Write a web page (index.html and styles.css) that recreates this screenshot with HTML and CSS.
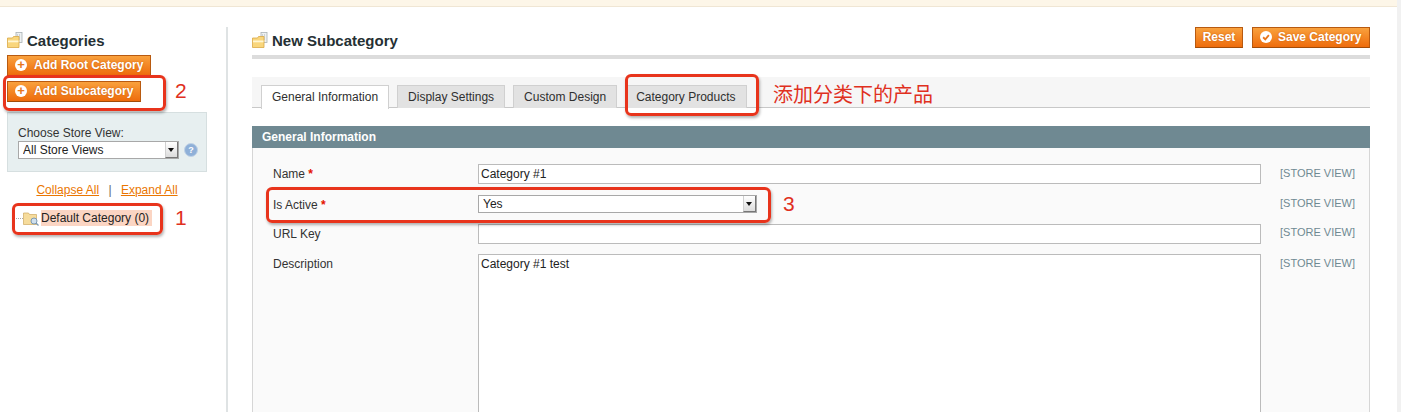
FILE: index.html
```html
<!DOCTYPE html>
<html lang="en">
<head>
    <meta charset="UTF-8">
    <title>New Subcategory</title>
    <link rel="stylesheet" href="styles.css">
</head>
<body>
    <div class="notice"></div>

    <div class="page">
        <!-- Left column -->
        <aside class="side">
            <h3 class="head-title">
                <svg class="folder" viewBox="0 0 16 16"><rect x="9" y="0.5" width="6" height="10" fill="#eef1f2" stroke="#a9b1b5" stroke-width="0.8"/><path d="M10.5 2v6M12.5 2v6" stroke="#c3cacd" stroke-width="0.8"/><path d="M0.5 6h5l1-1.5h5.5v11h-11.500z" fill="#f9d67c" stroke="#d9a845" stroke-width="0.8"/><rect x="1" y="8.500" width="10.500" height="1.800" fill="#fff6d2"/></svg>
                Categories
            </h3>
            <button class="btn btn-root"><span class="plus">+</span>Add Root Category</button>
            <button class="btn btn-sub"><span class="plus">+</span>Add Subcategory</button>

            <div class="store-box">
                <label class="store-label">Choose Store View:</label>
                <div class="store-row">
                    <div class="select-wrap store-select">
                        <select><option>All Store Views</option></select>
                        <span class="select-arrow"></span>
                    </div>
                    <span class="help">?</span>
                </div>
            </div>

            <div class="tree-links">
                <a href="#">Collapse All</a>
                <span class="sep">|</span>
                <a href="#">Expand All</a>
            </div>

            <div class="tree-node">
                <span class="tree-dots"></span>
                <svg class="tree-icon" viewBox="0 0 16 15"><path d="M0.5 2h5l1 1.5h7v10h-13z" fill="#f6dc9c" stroke="#cfa960" stroke-width="0.7"/><circle cx="11" cy="10" r="3" fill="#cfe0ee" stroke="#7d9ab3"/><path d="M13 12l2.500 2.500" stroke="#7d9ab3" stroke-width="1.200"/></svg>
                <span class="tree-text">Default Category (0)</span>
            </div>
        </aside>

        <!-- Main column -->
        <main class="main">
            <div class="content-head">
                <h3 class="head-title">
                    <svg class="folder" viewBox="0 0 16 16"><rect x="9" y="0.5" width="6" height="10" fill="#eef1f2" stroke="#a9b1b5" stroke-width="0.8"/><path d="M10.5 2v6M12.5 2v6" stroke="#c3cacd" stroke-width="0.8"/><path d="M0.5 6h5l1-1.5h5.5v11h-11.500z" fill="#f9d67c" stroke="#d9a845" stroke-width="0.8"/><rect x="1" y="8.500" width="10.500" height="1.800" fill="#fff6d2"/></svg>
                    New Subcategory
                </h3>
                <div class="head-buttons">
                    <button class="btn btn-reset">Reset</button>
                    <button class="btn btn-save"><span class="plus check"><svg viewBox="0 0 10 10"><path d="M2.6 5.2l1.800 1.800 3-3.600" fill="none" stroke="#e8761c" stroke-width="1.500"/></svg></span>Save Category</button>
                </div>
            </div>

            <ul class="tabs">
                <li class="tab active">General Information</li>
                <li class="tab">Display Settings</li>
                <li class="tab">Custom Design</li>
                <li class="tab">Category Products</li>
            </ul>

            <div class="section-head">General Information</div>
            <div class="fieldset">
                <div class="row row-name">
                    <label class="field-label">Name <em>*</em></label>
                    <input class="input" type="text" value="Category #1">
                    <span class="scope">[STORE VIEW]</span>
                </div>
                <div class="row row-active">
                    <label class="field-label">Is Active <em>*</em></label>
                    <div class="select-wrap active-select">
                        <select><option>Yes</option></select>
                        <span class="select-arrow"></span>
                    </div>
                    <span class="scope">[STORE VIEW]</span>
                </div>
                <div class="row row-url">
                    <label class="field-label">URL Key</label>
                    <input class="input" type="text">
                    <span class="scope">[STORE VIEW]</span>
                </div>
                <div class="row row-desc">
                    <label class="field-label">Description</label>
                    <textarea class="input area">Category #1 test</textarea>
                    <span class="scope">[STORE VIEW]</span>
                </div>
            </div>
        </main>
    </div>

    <div class="gutter"></div>

    <!-- Red notes drawn over the screenshot -->
    <div class="mark mark-sub"></div>
    <div class="mark mark-node"></div>
    <div class="mark mark-tab"></div>
    <div class="mark mark-active"></div>
    <span class="note note-1">1</span>
    <span class="note note-2">2</span>
    <span class="note note-3">3</span>
    <span class="note note-cn">添加分类下的产品</span>
</body>
</html>
```

FILE: styles.css
```css
html, body {
    height: 412px;
    overflow: hidden;
}

body {
    margin: 0;
    background: #fff;
    color: #2f2f2f;
    font-family: "Liberation Sans", Arial, sans-serif;
    font-size: 12px;
    position: relative;
}

.notice {
    height: 6px;
    background: #fdf6e8;
    border-bottom: 1px solid #f0e6d4;
}

.page {
    display: flex;
    height: 385px;
    overflow: hidden;
    padding: 20px 31px 0 7px;
}

.gutter {
    position: absolute;
    top: 0;
    right: 0;
    width: 4px;
    height: 412px;
    background: #f1f1f1;
}

/* left column */
.side {
    width: 200px;
    flex: none;
    margin-right: 19px;
    padding-top: 7px;
}

.head-title {
    margin: 0;
    display: flex;
    align-items: center;
    gap: 4px;
    height: 12px;
    font-size: 15px;
    font-weight: bold;
    color: #253033;
}

.folder {
    width: 16px;
    height: 16px;
    flex: none;
}

.btn {
    display: flex;
    align-items: center;
    padding: 0 0 1px;
    border: 1px solid #b85a10;
    border-bottom-color: #a34c08;
    background: linear-gradient(#f9a13d, #ee6c0c);
    color: #fff;
    font-family: inherit;
    font-size: 12px;
    font-weight: bold;
    text-shadow: 0 0 2px #c8600f;
}

.plus {
    width: 12px;
    height: 12px;
    margin-right: 7px;
    border-radius: 50%;
    background: #fff;
    color: #e8761c;
    font-size: 13px;
    line-height: 11px;
    text-align: center;
    text-shadow: none;
}

.btn-root {
    width: 144px;
    height: 21px;
    margin-top: 9px;
    padding-left: 7px;
}

.btn-sub {
    width: 134px;
    height: 21px;
    margin-top: 5px;
    padding-left: 7px;
}

.store-box {
    height: 60px;
    margin-top: 10px;
    padding: 13px 0 0 10px;
    background: #e7eff0;
    border: 1px solid #d6dfe0;
    box-sizing: border-box;
}

.store-label {
    display: block;
    line-height: 14px;
    color: #333;
}

.store-row {
    display: flex;
    align-items: center;
    gap: 5px;
    margin-top: 1px;
}

.select-wrap {
    position: relative;
    height: 18px;
    box-sizing: border-box;
    border: 1px solid #a8a8a8;
    background: #fff;
}

.select-wrap select {
    display: block;
    width: 100%;
    height: 16px;
    border: 0;
    padding: 0 0 0 4px;
    background: transparent;
    font-family: inherit;
    font-size: 12px;
    color: #222;
    appearance: none;
}

.select-arrow {
    position: absolute;
    top: 0;
    right: 0;
    width: 13px;
    height: 16px;
    background: linear-gradient(#fff, #dcdcdc);
    border-left: 1px solid #d0d0d0;
    border-right: 1px solid #777;
    border-bottom: 1px solid #777;
    box-sizing: border-box;
}

.select-arrow::after {
    content: "";
    position: absolute;
    left: 2px;
    top: 6px;
    border: 3px solid transparent;
    border-top: 4px solid #111;
    border-bottom: 0;
}

.store-select {
    width: 161px;
}

.help {
    width: 14px;
    height: 14px;
    border-radius: 50%;
    background: #8fb0d8;
    border: 1px solid #c0d2e6;
    box-sizing: border-box;
    color: #fff;
    font-size: 9px;
    font-weight: bold;
    line-height: 12px;
    text-align: center;
}

.tree-links {
    margin-top: 11px;
    text-align: center;
    line-height: 14px;
    color: #666;
}

.tree-links a {
    color: #ea7601;
}

.sep {
    margin: 0 6px;
}

.tree-node {
    display: flex;
    align-items: center;
    margin: 13px 0 0 9px;
    height: 16px;
}

.tree-dots {
    width: 7px;
    border-top: 1px dotted #aaa;
}

.tree-icon {
    width: 16px;
    height: 15px;
    flex: none;
    margin-right: 2px;
}

.tree-text {
    background: #fbd5c3;
    color: #222;
    padding: 0 3px 0 0;
    line-height: 16px;
}

/* main column */
.main {
    flex: 1;
    min-width: 0;
    border-left: 2px solid #dfe3e4;
    padding: 7px 0 0 24px;
}

.content-head {
    display: flex;
    justify-content: space-between;
    align-items: flex-start;
    height: 15px;
    padding-bottom: 6px;
    border-bottom: 4px solid #dcdcdc;
}

.head-buttons {
    display: flex;
    gap: 9px;
    margin-top: -7px;
}

.btn-reset {
    width: 48px;
    height: 21px;
    justify-content: center;
}

.btn-save {
    width: 118px;
    height: 21px;
    padding-left: 7px;
}

.check {
    display: block;
    margin-right: 6px;
}

.check svg {
    display: block;
    width: 12px;
    height: 12px;
}

.tabs {
    display: flex;
    gap: 8px;
    height: 31px;
    margin: 18px 0 0;
    padding: 8px 0 0 9px;
    box-sizing: border-box;
    list-style: none;
    background: #f6f6f6;
    border-bottom: 1px solid #c8c8c8;
}

.tab {
    height: 22px;
    padding: 0 10px;
    line-height: 22px;
    background: #e2e2e2;
    border: 1px solid #d0d0d0;
    border-bottom: 0;
    color: #2f2f2f;
}

.tab.active {
    height: 23px;
    background: #fff;
    z-index: 1;
}

.section-head {
    height: 22px;
    margin-top: 18px;
    padding-left: 10px;
    line-height: 23px;
    background: #6f8992;
    color: #fff;
    font-weight: bold;
}

.fieldset {
    height: 300px;
    padding: 16px 0 0 20px;
    background: #fafafa;
    border: 1px solid #d6d6d6;
    border-top: 0;
}

.row {
    display: grid;
    grid-template-columns: 205px 783px auto;
    align-items: start;
}

.row-name {
    height: 31px;
}

.row-active {
    height: 29px;
}

.row-url {
    height: 30px;
}

.field-label {
    line-height: 20px;
    color: #333;
}

.field-label em {
    color: #e41101;
    font-style: normal;
    font-weight: bold;
}

.input {
    display: block;
    width: 100%;
    height: 20px;
    box-sizing: border-box;
    margin: 0;
    padding: 0 2px;
    border: 1px solid #bbb;
    background: #fff;
    font-family: inherit;
    font-size: 12px;
    color: #222;
}

.area {
    height: 200px;
    padding-top: 2px;
    resize: none;
}

.active-select {
    width: 279px;
}

.scope {
    margin-left: 19px;
    white-space: nowrap;
    font-size: 11px;
    line-height: 18px;
    color: #6f8992;
}

.row-active .scope,
.row-url .scope {
    margin-top: -1px;
}

/* annotations */
.mark {
    position: absolute;
    box-sizing: border-box;
    border: 3px solid #e8341c;
    border-radius: 6px;
    box-shadow: 1px 2px 3px rgba(0, 0, 0, 0.3);
}

.mark-sub {
    left: 3px;
    top: 75px;
    width: 163px;
    height: 36px;
}

.mark-node {
    left: 12px;
    top: 203px;
    width: 151px;
    height: 32px;
}

.mark-tab {
    left: 625px;
    top: 74px;
    width: 134px;
    height: 42px;
}

.mark-active {
    left: 266px;
    top: 187px;
    width: 505px;
    height: 36px;
}

.note {
    position: absolute;
    color: #e0301e;
    font-family: "Liberation Sans", Arial, sans-serif;
    font-size: 21px;
    line-height: 24px;
}

.note-1 {
    left: 175px;
    top: 206px;
}

.note-2 {
    left: 175px;
    top: 79px;
}

.note-3 {
    left: 783px;
    top: 192px;
}

.note-cn {
    left: 773px;
    top: 83px;
    font-family: "Liberation Sans", "Noto Sans CJK SC", sans-serif;
    font-size: 20px;
}
```
